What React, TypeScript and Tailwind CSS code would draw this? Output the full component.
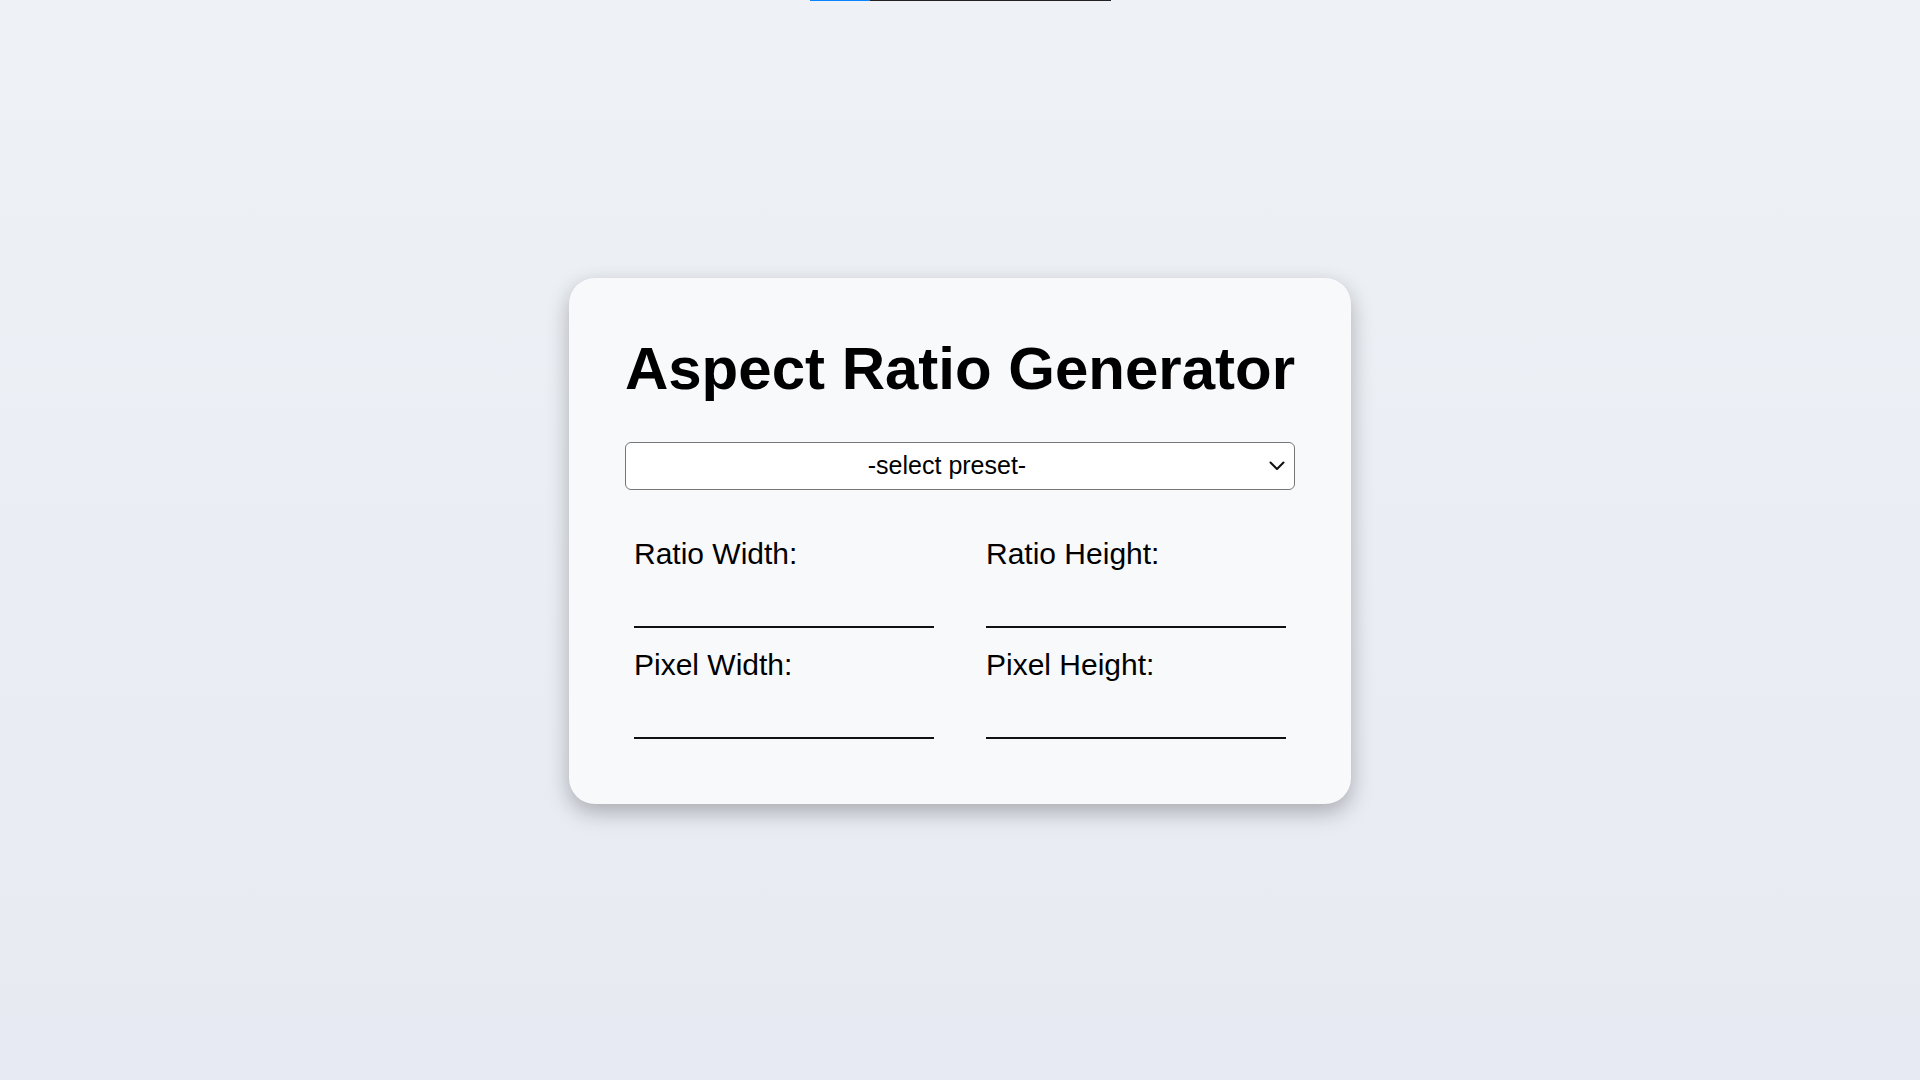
import { useState } from "react";

const presets = ["-select preset-", "16:9", "4:3", "1:1", "21:9", "9:16"];

function Field({ label, value, onChange }: { label: string; value: string; onChange: (v: string) => void }) {
  return (
    <div className="flex flex-col">
      <label className="h-[33px] whitespace-nowrap text-[30px] leading-[33px] text-black">{label}</label>
      <input
        type="text"
        value={value}
        onChange={(e) => onChange(e.target.value)}
        className="h-[58px] w-[300px] border-0 border-b-2 border-[#111] bg-transparent text-[24px] outline-none"
      />
    </div>
  );
}

export default function App() {
  const [preset, setPreset] = useState(presets[0]);
  const [rw, setRw] = useState("");
  const [rh, setRh] = useState("");
  const [pw, setPw] = useState("");
  const [ph, setPh] = useState("");

  return (
    <div
      className="flex h-screen flex-col bg-gradient-to-b from-[#eef1f5] to-[#e7eaf2]"
      style={{ fontFamily: '"Liberation Sans", Arial, sans-serif' }}
    >
      {/* top progress strip */}
      <div className="flex h-px justify-center">
        <div className="flex h-px w-[301px] bg-[#222]">
          <div className="h-px w-[60px] bg-[#0a84ff]" />
        </div>
      </div>

      <main className="flex flex-1 items-center justify-center">
        <div className="w-[782px] rounded-[26px] bg-[#f8f9fb] px-14 pt-14 pb-[65px] shadow-[0_8px_22px_rgba(0,0,0,0.28)]">
          <h1 className="-mx-4 mb-[39px] whitespace-nowrap text-center text-[60px] font-bold leading-[69px] text-black">
            Aspect Ratio Generator
          </h1>

          <div className="relative">
            <select
              value={preset}
              onChange={(e) => setPreset(e.target.value)}
              className="h-[48px] w-full appearance-none rounded-md border border-[#767676] bg-white pl-2 pr-[34px] text-[25px] text-black outline-none [text-align-last:center]"
            >
              {presets.map((p) => (
                <option key={p} value={p}>
                  {p}
                </option>
              ))}
            </select>
            <svg
              className="pointer-events-none absolute right-[10px] top-[19px]"
              width="16"
              height="10"
              viewBox="0 0 16 10"
              fill="none"
            >
              <path d="M1.5 1.5L8 8L14.5 1.5" stroke="#111" strokeWidth="2" strokeLinecap="round" strokeLinejoin="round" />
            </svg>
          </div>

          <div className="mt-[47px] grid grid-cols-[300px_300px] gap-x-[52px] gap-y-[20px] px-[9px]">
            <Field label="Ratio Width:" value={rw} onChange={setRw} />
            <Field label="Ratio Height:" value={rh} onChange={setRh} />
            <Field label="Pixel Width:" value={pw} onChange={setPw} />
            <Field label="Pixel Height:" value={ph} onChange={setPh} />
          </div>
        </div>
      </main>
    </div>
  );
}
